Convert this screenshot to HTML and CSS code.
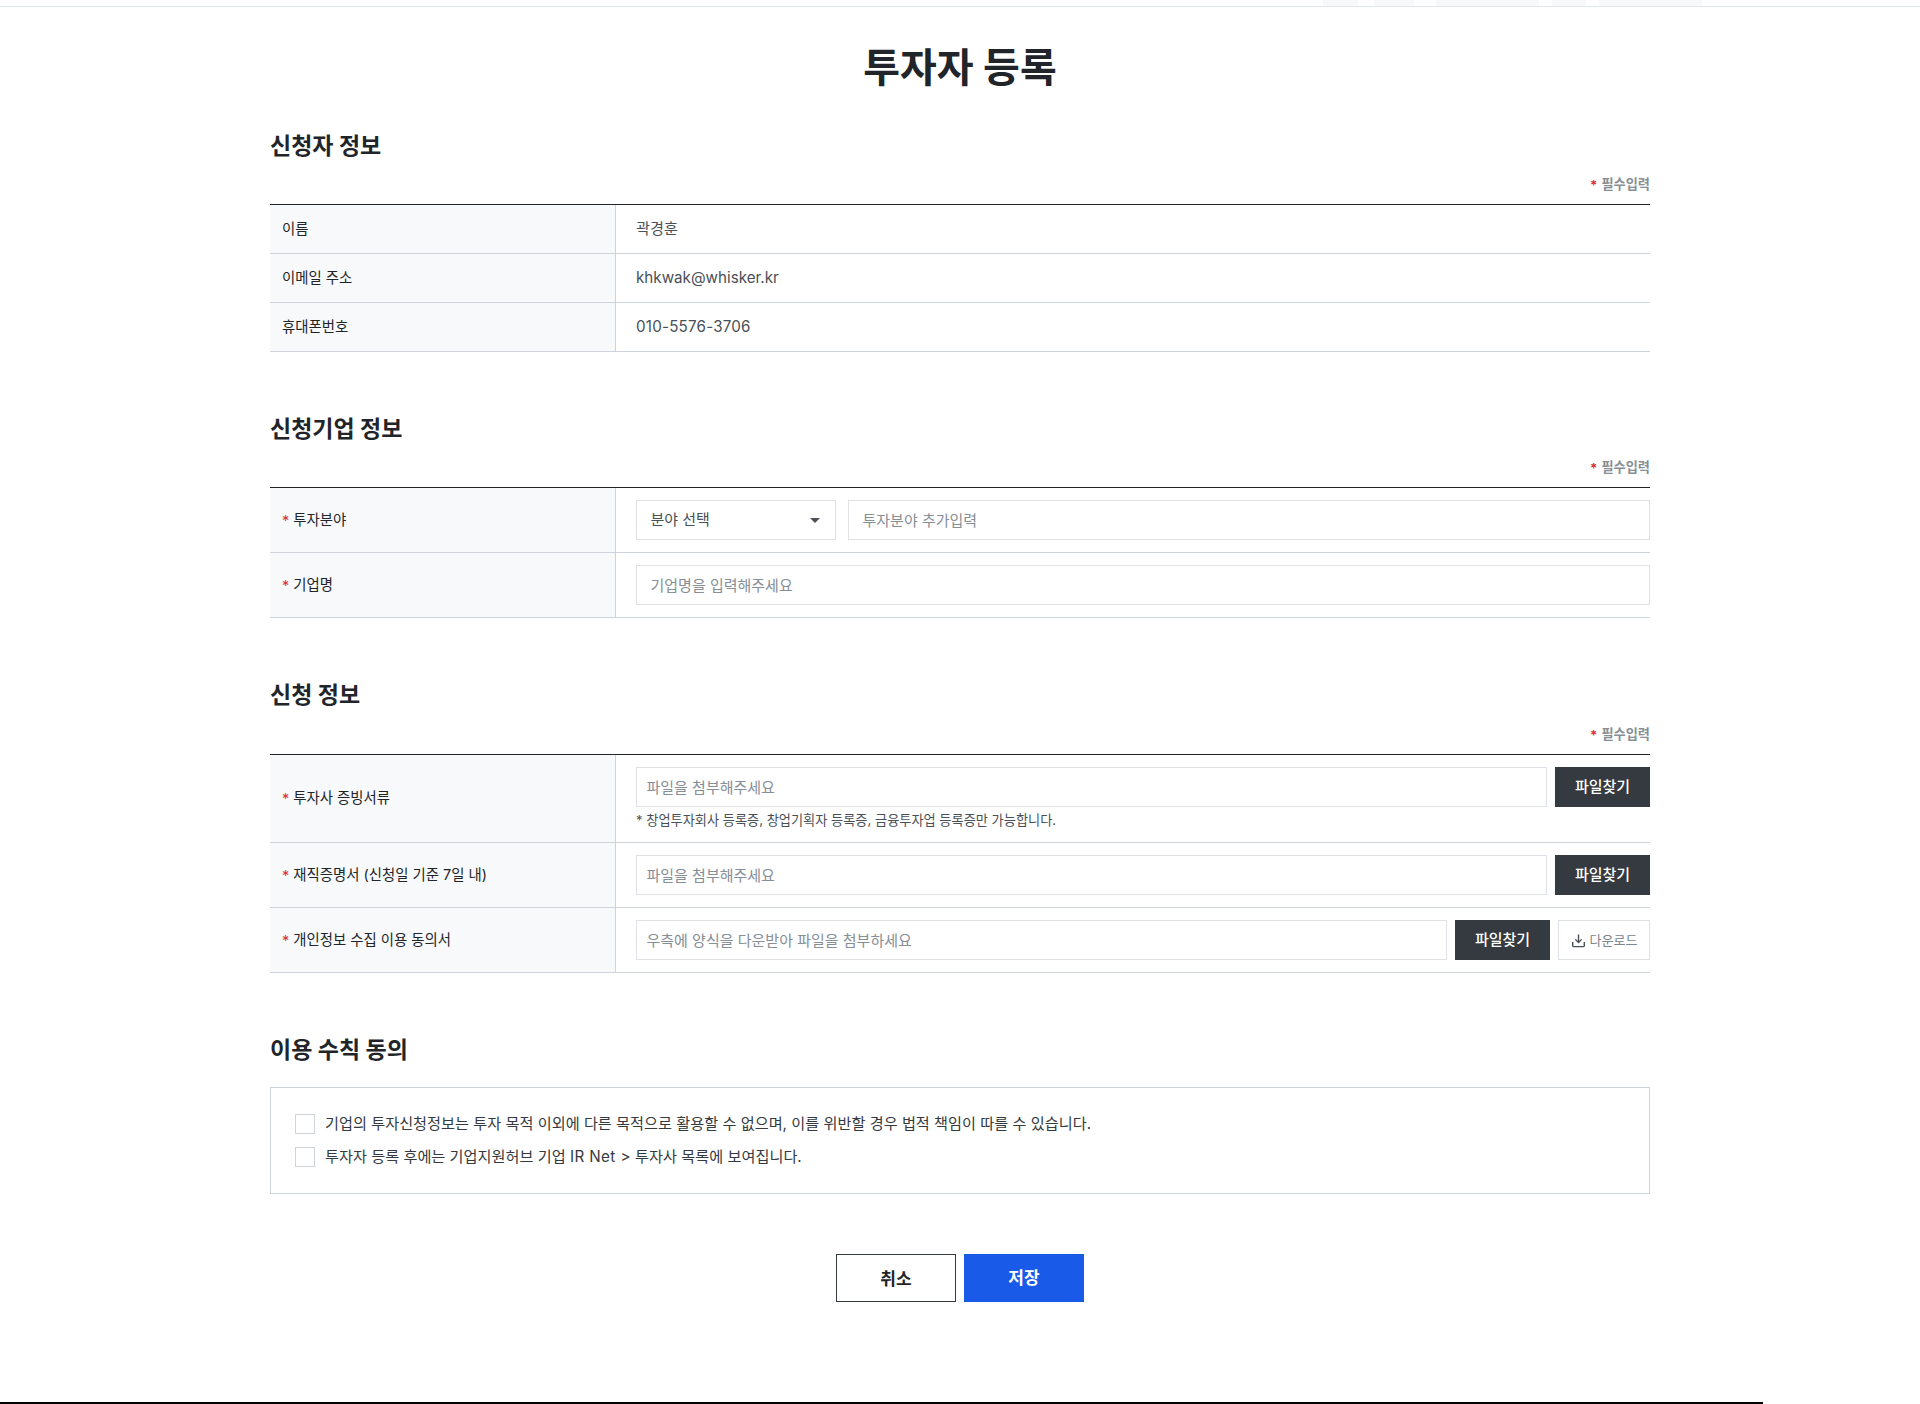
FILE: index.html
```html
<!DOCTYPE html>
<html lang="ko">
<head>
<meta charset="utf-8">
<title>투자자 등록</title>
<link rel="stylesheet" href="styles.css">
</head>
<body>
<header class="top-strip">
  <span class="ghost g1"></span>
  <span class="ghost g2"></span>
  <span class="ghost g3"></span>
  <span class="ghost g4"></span>
  <span class="ghost g5"></span>
</header>
<main class="page">
  <h1 class="page-title">투자자 등록</h1>

  <section class="section first">
    <h2 class="section-title">신청자 정보</h2>
    <p class="required-note"><span class="star">*</span> 필수입력</p>
    <table class="form-table">
      <tr class="row-info"><th>이름</th><td class="plain name">곽경훈</td></tr>
      <tr class="row-info"><th>이메일 주소</th><td class="plain">khkwak@whisker.kr</td></tr>
      <tr class="row-info"><th>휴대폰번호</th><td class="plain phone">010-5576-3706</td></tr>
    </table>
  </section>

  <section class="section">
    <h2 class="section-title">신청기업 정보</h2>
    <p class="required-note"><span class="star">*</span> 필수입력</p>
    <table class="form-table">
      <tr><th><span class="star">*</span> 투자분야</th>
        <td><div class="field-row gap12">
          <div class="select-box"><span>분야 선택</span><i class="caret"></i></div>
          <input class="text-input pad14" type="text" placeholder="투자분야 추가입력">
        </div></td></tr>
      <tr><th><span class="star">*</span> 기업명</th>
        <td><div class="field-row"><input class="text-input pad14" type="text" placeholder="기업명을 입력해주세요"></div></td></tr>
    </table>
  </section>

  <section class="section">
    <h2 class="section-title title-gap">신청 정보</h2>
    <p class="required-note"><span class="star">*</span> 필수입력</p>
    <table class="form-table">
      <tr><th><span class="star">*</span> 투자사 증빙서류</th>
        <td><div class="field-row gap8">
          <input class="text-input" type="text" placeholder="파일을 첨부해주세요">
          <button class="btn-dark" type="button">파일찾기</button>
        </div>
        <p class="hint">* 창업투자회사 등록증, 창업기획자 등록증, 금융투자업 등록증만 가능합니다.</p></td></tr>
      <tr><th><span class="star">*</span> 재직증명서 (신청일 기준 7일 내)</th>
        <td><div class="field-row gap8">
          <input class="text-input" type="text" placeholder="파일을 첨부해주세요">
          <button class="btn-dark" type="button">파일찾기</button>
        </div></td></tr>
      <tr><th><span class="star">*</span> 개인정보 수집 이용 동의서</th>
        <td><div class="field-row gap8">
          <input class="text-input" type="text" placeholder="우측에 양식을 다운받아 파일을 첨부하세요">
          <button class="btn-dark" type="button">파일찾기</button>
          <button class="btn-down" type="button">
            <svg class="down-icon" viewBox="0 0 16 16" width="15" height="15" fill="none" stroke="#495057" stroke-width="1.5" aria-hidden="true"><path d="M8 1.5v8.5M4.6 6.8 8 10.2l3.4-3.4"/><path d="M1.8 9.5v4.2a.8.8 0 0 0 .8.8h10.8a.8.8 0 0 0 .8-.8V9.5"/></svg>
            <span>다운로드</span>
          </button>
        </div></td></tr>
    </table>
  </section>

  <section class="section">
    <h2 class="section-title agree-title">이용 수칙 동의</h2>
    <div class="agree-box">
      <label class="agree-item"><span class="check"></span><span>기업의 투자신청정보는 투자 목적 이외에 다른 목적으로 활용할 수 없으며, 이를 위반할 경우 법적 책임이 따를 수 있습니다.</span></label>
      <label class="agree-item"><span class="check"></span><span>투자자 등록 후에는 기업지원허브 기업 <span class="latin">IR Net &gt;</span> 투자사 목록에 보여집니다.</span></label>
    </div>
  </section>

  <div class="actions">
    <button class="btn-cancel" type="button">취소</button>
    <button class="btn-save" type="button">저장</button>
  </div>
</main>
<div class="bottom-bar"></div>
</body>
</html>
```
FILE: styles.css
```css
* { box-sizing: border-box; }
html, body { margin: 0; padding: 0; background: #fff; }
body {
  font-family: "Inter", "Noto Sans CJK KR", sans-serif;
  color: #212529;
  font-size: 15px;
  height: 1404px;
  overflow: hidden;
}
.top-strip {
  height: 7px;
  border-bottom: 1px solid #e2e6ee;
  display: flex;
  padding-left: 1323px;
}
.ghost { display: block; height: 6px; background: #f6f8fa; }
.g1 { width: 35px; margin-right: 16px; }
.g2 { width: 40px; margin-right: 22px; }
.g3 { width: 103px; margin-right: 13px; }
.g4 { width: 34px; margin-right: 13px; }
.g5 { width: 103px; }

.page { width: 1380px; margin: 0 auto; }
.page-title {
  margin: 34px 0 0;
  height: 54px;
  line-height: 54px;
  text-align: center;
  font-size: 40px;
  font-weight: 700;
  color: #212529;
}
.section { margin-top: 58px; }
.section.first { margin-top: 32px; }
.section-title {
  margin: 0 0 11px;
  height: 36px;
  line-height: 36px;
  padding-top: 1px;
  font-size: 23px;
  font-weight: 700;
  color: #212529;
}
.title-gap { margin-bottom: 12px; }
.required-note {
  margin: 0 0 10px;
  height: 20px;
  line-height: 20px;
  text-align: right;
  font-size: 13.2px;
  font-weight: 700;
  color: #868e96;
}
.required-note .star { margin-right: 1px; }
.star { color: #e03131; position: relative; top: 1px; }

.form-table {
  width: 100%;
  border-collapse: separate;
  border-spacing: 0;
  table-layout: fixed;
  border-top: 1px solid #212529;
}
.form-table th {
  width: 346px;
  padding: 0 12px 4px;
  background: #f8f9fa;
  text-align: left;
  font-weight: 400;
  font-size: 14.4px;
  color: #212529;
  border-right: 1px solid #ced4da;
  border-bottom: 1px solid #ced4da;
}
.form-table td {
  padding: 12px 0 12px 20px;
  border-bottom: 1px solid #ced4da;
  vertical-align: top;
}
.row-info th, .row-info td.plain { height: 49px; }
.form-table td.plain {
  padding-top: 0;
  padding-bottom: 2px;
  vertical-align: middle;
  font-size: 15.2px;
  color: #495057;
}
.form-table td.name { padding-bottom: 4px; }
.form-table td.phone { letter-spacing: 0.2px; }

.field-row { display: flex; height: 40px; }
.gap8 { gap: 8px; }
.gap12 { gap: 12px; }
.text-input {
  flex: 1 1 0;
  min-width: 0;
  height: 40px;
  border: 1px solid #dee2e6;
  padding: 0 9.5px;
  background: #fff;
  font-family: inherit;
  font-size: 15px;
  color: #212529;
  border-radius: 0;
  outline: none;
}
.pad14 { padding: 0 13.5px; }
.text-input::placeholder { color: #868e96; opacity: 1; }
.select-box {
  width: 200px;
  flex: none;
  height: 40px;
  border: 1px solid #dee2e6;
  padding: 0 13.5px 3px;
  display: flex;
  align-items: center;
  justify-content: space-between;
  font-size: 15px;
  color: #495057;
}
.caret {
  display: block;
  width: 0;
  height: 0;
  border-left: 5px solid transparent;
  border-right: 5px solid transparent;
  border-top: 5px solid #495057;
  margin-right: 2px;
  margin-top: 3px;
}
.btn-dark {
  flex: none;
  width: 95px;
  height: 40px;
  border: 0;
  background: #343a40;
  color: #fff;
  font-family: inherit;
  font-size: 15px;
  font-weight: 500;
  padding: 0 0 4px;
}
.btn-down {
  flex: none;
  width: 92px;
  height: 40px;
  border: 1px solid #dee2e6;
  background: #fff;
  color: #7b838b;
  font-family: inherit;
  font-size: 13px;
  padding: 0;
  display: flex;
  align-items: center;
  justify-content: center;
  gap: 4px;
}
.btn-down span { position: relative; top: -1px; }
.down-icon { display: block; }
.hint {
  margin: 3px 0 0;
  height: 20px;
  line-height: 20px;
  font-size: 13.2px;
  color: #495057;
}

.agree-title { margin-bottom: 20px; }
.agree-box {
  height: 107px;
  border: 1px solid #ced4da;
  padding: 26px 24px;
  display: flex;
  flex-direction: column;
  gap: 13px;
}
.agree-item {
  display: flex;
  align-items: center;
  gap: 10px;
  height: 20px;
  font-size: 15.2px;
  color: #343a40;
}
.agree-item > span:last-child { padding-bottom: 4px; }
.latin { letter-spacing: 0.4px; }
.check {
  display: block;
  width: 20px;
  height: 20px;
  border: 1px solid #ced4da;
  background: #fff;
  flex: none;
}
.actions {
  margin-top: 60px;
  display: flex;
  justify-content: center;
  gap: 8px;
}
.btn-cancel, .btn-save {
  width: 120px;
  height: 48px;
  font-family: inherit;
  font-size: 17px;
  font-weight: 700;
}
.btn-cancel { background: #fff; border: 1px solid #343a40; color: #212529; padding: 0 0 2px; }
.btn-save { background: #1a5ae8; border: 0; color: #fff; padding: 0 0 3px; }
.bottom-bar {
  position: absolute;
  left: 0;
  top: 1402px;
  width: 1763px;
  height: 2px;
  background: #000;
}
```
